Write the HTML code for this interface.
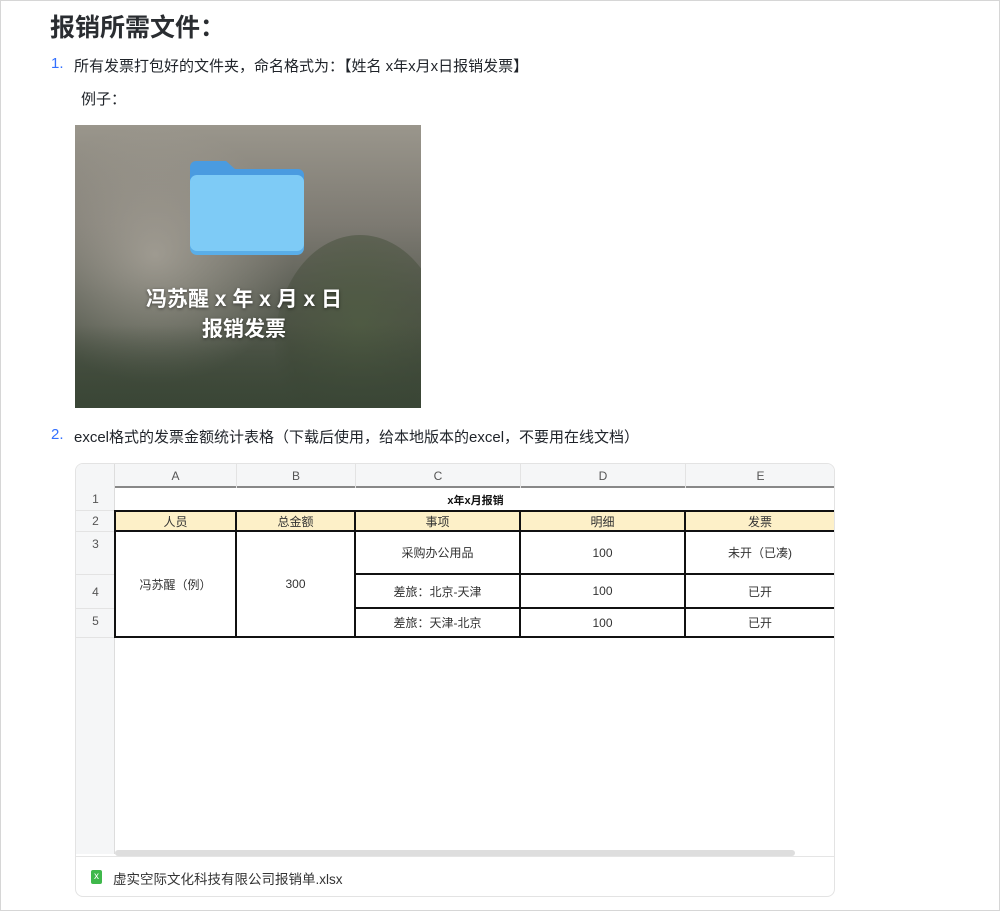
<!DOCTYPE html>
<html><head><meta charset="utf-8"><style>
*{box-sizing:border-box;margin:0;padding:0}
body{width:1000px;height:911px;position:relative;background:#fff;font-family:"Liberation Sans","Noto Sans CJK SC",sans-serif;color:#1f2329;overflow:hidden}
.frame{position:absolute;left:0;top:0;width:1000px;height:911px;border:1px solid #d6d6d6}
.a{position:absolute;white-space:nowrap}
.t{position:absolute;display:flex;align-items:center;justify-content:center;font-size:12px;color:#333}
.h{color:#555;font-size:12px}
</style></head><body>
<div class="frame"></div>
<div class="a" style="left:50px;top:8px;font-size:25px;font-weight:bold;color:#2a2d31">报销所需文件：</div>
<div class="a" style="left:51px;top:55px;font-size:15px;color:#3370ff">1.</div>
<div class="a" style="left:74px;top:55px;font-size:15px">所有发票打包好的文件夹，命名格式为：【姓名 x年x月x日报销发票】</div>
<div class="a" style="left:81px;top:88px;font-size:15px">例子：</div>
<div class="a" style="left:75px;top:125px;width:346px;height:283px;overflow:hidden;background:linear-gradient(180deg,#9a968c 0%,#7d7a72 35%,#5d6056 60%,#414b3b 100%)">
 <div style="position:absolute;left:-60px;top:0px;width:280px;height:260px;border-radius:50%;background:radial-gradient(rgba(170,165,155,.8),rgba(160,155,145,0) 70%);"></div>
 <div style="position:absolute;left:200px;top:110px;width:170px;height:220px;border-radius:50% 50% 0 0;background:radial-gradient(ellipse at 50% 40%,rgba(77,90,64,.8),rgba(60,70,50,0.4) 60%,rgba(0,0,0,0) 75%)"></div>
 <div style="position:absolute;left:0;top:200px;width:346px;height:83px;background:linear-gradient(180deg,rgba(50,60,45,0),#3a4636)"></div>
 <svg style="position:absolute;left:115px;top:36px" width="114" height="96" viewBox="0 0 114 96">
  <path d="M6 0h30l9 8h63a6 6 0 0 1 6 6v70H0V6a6 6 0 0 1 6-6z" fill="#4a9be0"/>
  <rect x="0" y="15" width="114" height="79" rx="7" fill="#5aaee8"/>
  <rect x="0" y="14" width="114" height="76" rx="7" fill="#7ecbf6"/>
 </svg>
 <div style="position:absolute;left:-4px;width:346px;top:160px;text-align:center;color:#fff;font-size:21px;font-weight:bold;line-height:30px;text-shadow:0 1px 3px rgba(0,0,0,.5)">冯苏醒 x 年 x 月 x 日<br>报销发票</div>
</div>
<div class="a" style="left:51px;top:426px;font-size:15px;color:#3370ff">2.</div>
<div class="a" style="left:74px;top:426px;font-size:15px">excel格式的发票金额统计表格（下载后使用，给本地版本的excel，不要用在线文档）</div>

<div class="a" style="left:75px;top:463px;width:760px;height:434px;border:1px solid #e3e3e3;border-radius:8px;overflow:hidden;background:#fff">
 <div style="position:absolute;left:0;top:0;width:760px;height:24px;background:#f5f6f7;border-bottom:2px solid #888"></div>
 <div style="position:absolute;left:0;top:0;width:39px;height:390px;background:#f5f6f7;border-right:1px solid #ddd"></div>
 <div class="t h" style="left:39px;top:0;width:121px;height:24px">A</div>
 <div class="t h" style="left:160px;top:0;width:119px;height:24px;border-left:1px solid #e3e3e3">B</div>
 <div class="t h" style="left:279px;top:0;width:165px;height:24px;border-left:1px solid #e3e3e3">C</div>
 <div class="t h" style="left:444px;top:0;width:165px;height:24px;border-left:1px solid #e3e3e3">D</div>
 <div class="t h" style="left:609px;top:0;width:150px;height:24px;border-left:1px solid #e3e3e3">E</div>
 <div class="t h" style="left:0;top:24px;width:39px;height:23px;border-bottom:1px solid #e3e3e3">1</div>
 <div class="t h" style="left:0;top:47px;width:39px;height:21px;border-bottom:1px solid #e3e3e3">2</div>
 <div class="t h" style="left:0;top:68px;width:39px;height:43px;border-bottom:1px solid #e3e3e3;align-items:flex-start;padding-top:5px">3</div>
 <div class="t h" style="left:0;top:111px;width:39px;height:34px;border-bottom:1px solid #e3e3e3">4</div>
 <div class="t h" style="left:0;top:145px;width:39px;height:29px;border-bottom:1px solid #e3e3e3;align-items:flex-start;padding-top:5px">5</div>
 <div class="t" style="left:39px;top:24px;width:721px;height:23px;font-weight:bold;font-size:11px;color:#111">x年x月报销</div>
 <div style="position:absolute;left:39px;top:46px;width:721px;height:22px;background:#fdf0c8;border-top:2px solid #111;border-bottom:2px solid #111"></div>
 <div class="t" style="left:39px;top:47px;width:121px;height:21px">人员</div>
 <div class="t" style="left:160px;top:47px;width:119px;height:21px">总金额</div>
 <div class="t" style="left:279px;top:47px;width:165px;height:21px">事项</div>
 <div class="t" style="left:444px;top:47px;width:165px;height:21px">明细</div>
 <div class="t" style="left:609px;top:47px;width:150px;height:21px">发票</div>
 <div class="t" style="left:39px;top:68px;width:121px;height:106px;border-bottom:2px solid #111">冯苏醒（例）</div>
 <div class="t" style="left:160px;top:68px;width:119px;height:106px;border-bottom:2px solid #111">300</div>
 <div class="t" style="left:279px;top:68px;width:330px;height:43px;border-bottom:2px solid #111"><span style="width:165px;text-align:center">采购办公用品</span><span style="width:165px;text-align:center">100</span></div>
 <div class="t" style="left:609px;top:68px;width:150px;height:43px;border-bottom:2px solid #111">未开（已凑)</div>
 <div class="t" style="left:279px;top:111px;width:480px;height:34px;border-bottom:2px solid #111"><span style="width:165px;text-align:center">差旅：北京-天津</span><span style="width:165px;text-align:center">100</span><span style="width:150px;text-align:center">已开</span></div>
 <div class="t" style="left:279px;top:145px;width:480px;height:29px;border-bottom:2px solid #111"><span style="width:165px;text-align:center">差旅：天津-北京</span><span style="width:165px;text-align:center">100</span><span style="width:150px;text-align:center">已开</span></div>
 <div style="position:absolute;left:38px;top:46px;width:2px;height:128px;background:#111"></div>
 <div style="position:absolute;left:159px;top:46px;width:2px;height:128px;background:#111"></div>
 <div style="position:absolute;left:278px;top:46px;width:2px;height:128px;background:#111"></div>
 <div style="position:absolute;left:443px;top:46px;width:2px;height:128px;background:#111"></div>
 <div style="position:absolute;left:608px;top:46px;width:2px;height:128px;background:#111"></div>
 <div style="position:absolute;left:39px;top:386px;width:680px;height:6px;background:#dedede;border-radius:3px"></div>
 <div style="position:absolute;left:0;top:392px;width:760px;height:1px;background:#e5e5e5"></div>
 <div style="position:absolute;left:15px;top:406px;width:11px;height:14px;background:#3fb84b;border-radius:2px;color:#fff;font-size:10px;text-align:center;line-height:14px">x</div>
 <div class="a" style="left:37px;top:404px;font-size:13.5px;color:#333">虚实空际文化科技有限公司报销单.xlsx</div>
</div>
</body></html>
